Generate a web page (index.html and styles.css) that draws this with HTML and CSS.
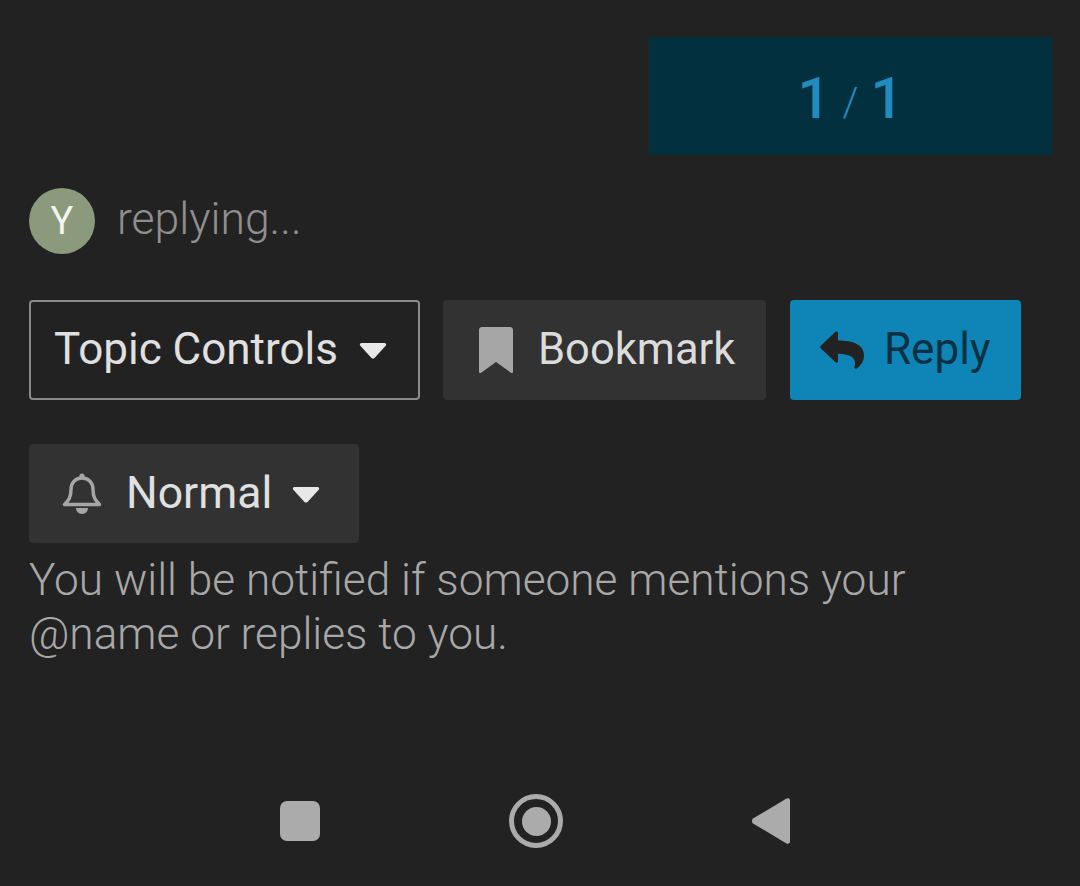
FILE: index.html
```html
<!DOCTYPE html>
<html lang="en">
<head>
  <meta charset="UTF-8">
  <meta name="viewport" content="width=device-width, initial-scale=1.0">
  <title>Topic footer</title>
  <link rel="stylesheet" href="styles.css">
</head>
<body>
  <div class="main">
    <div class="progress-row">
      <div class="progress">
        <span class="num">1</span><span class="slash">/</span><span class="num">1</span>
      </div>
    </div>

    <div class="presence">
      <div class="avatar">Y</div>
      <span class="presence-text">replying...</span>
    </div>

    <div class="buttons">
      <button class="btn btn-outline">
        Topic Controls
        <svg class="caret" viewBox="0 0 28 18"><path d="M2.5 1h23c1.5 0 2.200 1.700 1.200 2.800L15.500 16c-.8.800-2.200.800-3 0L1.300 3.800C.3 2.700 1 1 2.500 1z"/></svg>
      </button>
      <button class="btn btn-grey btn-bookmark">
        <svg class="icon-bookmark" viewBox="0 0 34 46"><path d="M0 3c0-1.700 1.300-3 3-3h28c1.700 0 3 1.300 3 3v42c0 1-1 1.400-1.800.900L17 35 1.800 45.900C1 46.400 0 46 0 45z"/></svg>
        Bookmark
      </button>
      <button class="btn btn-reply">
        <svg class="icon-reply" viewBox="0 0 44 38"><path d="M1 14.500 15.500.8c1-.9 2.500-.2 2.500 1.200v7.500c13 .2 26 2.800 26 15 0 6-3.500 10.500-7.500 13-1.200.7-2.500-.4-2-1.700 2-7 -.5-12.500-16.500-13V30c0 1.400-1.500 2.100-2.500 1.200L1 17.500c-.9-.8-.9-2.200 0-3z"/></svg>
        Reply
      </button>
    </div>

    <button class="btn btn-grey btn-notify">
      <svg class="icon-bell" viewBox="0 0 40 42"><path class="bell-line" d="M20 5c-7 0-11 5-11 11.500 0 8-2.500 11-6.500 15h35c-4-4-6.500-7-6.500-15C31 10 27 5 20 5z"/><circle class="bell-fill" cx="20" cy="3" r="2.600"/><path class="bell-fill" d="M14 35h12c0 3-2.500 6-6 6s-6-3-6-6z"/></svg>
      Normal
      <svg class="caret" viewBox="0 0 28 18"><path d="M2.500 1h23c1.500 0 2.200 1.700 1.200 2.800L15.500 16c-.8.800-2.200.800-3 0L1.300 3.800C.3 2.700 1 1 2.500 1z"/></svg>
    </button>
    <p class="notify-text">You will be notified if someone mentions your @name or replies to you.</p>
  </div>

  <div class="navbar">
    <div class="nav-square"></div>
    <div class="nav-circle"><div class="nav-dot"></div></div>
    <svg class="nav-back" viewBox="0 0 38 46"><path d="M1 20.500 34.500.6C36 -.3 38 .5 38 2.500v41c0 2-2 2.800-3.500 1.900L1 25.500c-1.300-1-1.300-4 0-5z"/></svg>
  </div>
</body>
</html>
```

FILE: styles.css
```css
/***----BASIC----***/
html, body {
  height: 100%;
}
body {
  margin: 0;
  background: #222222;
  font-family: 'Roboto', sans-serif;
  font-weight: 300;
  display: flex;
  flex-direction: column;
  overflow: hidden;
}
.main {
  flex: 1;
  padding: 37px 28px 0 29px;
}

/***----Progress----***/
.progress-row {
  display: flex;
  justify-content: flex-end;
}
.progress {
  width: 403px;
  height: 118px;
  background: #03303f;
  border-radius: 3px;
  display: flex;
  align-items: center;
  justify-content: center;
  gap: 12px;
  color: #1f8dbe;
  padding-top: 4px;
  box-sizing: border-box;
}
.progress .num {
  font-size: 58px;
  font-weight: 500;
  line-height: 1;
}
.progress .slash {
  font-size: 40px;
  font-weight: 300;
  line-height: 1;
  margin-top: 10px;
}

/***----Presence----***/
.presence {
  display: flex;
  align-items: center;
  gap: 23px;
  margin-top: 33px;
}
.avatar {
  width: 66px;
  height: 66px;
  border-radius: 50%;
  background: #8b9a7d;
  color: #f3f3f0;
  font-size: 38px;
  font-weight: 400;
  display: flex;
  align-items: center;
  justify-content: center;
}
.presence-text {
  color: #8f8f8f;
  font-size: 44.500px;
  margin: -4px 0 0 -1px;
}

/***----Buttons----***/
.buttons {
  display: flex;
  gap: 23px;
  margin-top: 46px;
}
.btn {
  height: 100px;
  box-sizing: border-box;
  display: flex;
  align-items: center;
  border: none;
  border-radius: 4px;
  padding: 0 0 2px;
  font-family: inherit;
  font-size: 44px;
  background: none;
}
.btn-outline {
  width: 391px;
  padding-left: 23px;
  background: #222222;
  border: 2px solid #8a8a8a;
  color: #e0e0e0;
  font-weight: 400;
  gap: 21px;
}
.btn-grey {
  background: #323232;
  color: #dcdcdc;
}
.btn-bookmark {
  width: 323px;
  padding-left: 36px;
  gap: 25px;
  font-size: 43.500px;
}
.btn-reply {
  width: 231px;
  margin-left: 1px;
  padding-left: 30px;
  gap: 20px;
  background: #0f84b6;
  color: #0c3144;
}
.btn-notify {
  width: 330px;
  height: 99px;
  margin-top: 44px;
  padding-left: 33px;
  color: #e0e0e0;
  font-weight: 400;
  font-size: 44.500px;
}
.notify-text {
  margin: 10px 0 0 0;
  width: 940px;
  color: #a8a8a8;
  font-size: 44.200px;
  line-height: 54px;
}

/***----Icons----***/
.caret {
  width: 28px;
  height: 18px;
  fill: #e8e8e8;
  margin-top: 4px;
}
.btn-notify .caret {
  margin-left: 20px;
}
.icon-bookmark {
  width: 34px;
  height: 46px;
  fill: #a6a6a6;
  margin-top: 2px;
}
.icon-reply {
  width: 44px;
  height: 38px;
  fill: #222222;
  margin-top: 2px;
}
.icon-bell {
  width: 40px;
  height: 42px;
  margin-right: 24px;
  margin-top: 2px;
}
.bell-line {
  fill: none;
  stroke: #a6a6a6;
  stroke-width: 3.500;
  stroke-linejoin: round;
}
.bell-fill {
  fill: #a6a6a6;
}

/***----Navbar----***/
.navbar {
  display: flex;
  align-items: center;
  gap: 189px;
  height: 54px;
  padding: 0 0 38px 280px;
}
.nav-square {
  width: 40px;
  height: 40px;
  border-radius: 7px;
  background: #ababab;
}
.nav-circle {
  width: 54px;
  height: 54px;
  box-sizing: border-box;
  border: 5px solid #ababab;
  border-radius: 50%;
  display: flex;
  align-items: center;
  justify-content: center;
}
.nav-dot {
  width: 29px;
  height: 29px;
  border-radius: 50%;
  background: #ababab;
}
.nav-back {
  width: 38px;
  height: 46px;
  fill: #ababab;
}
```
